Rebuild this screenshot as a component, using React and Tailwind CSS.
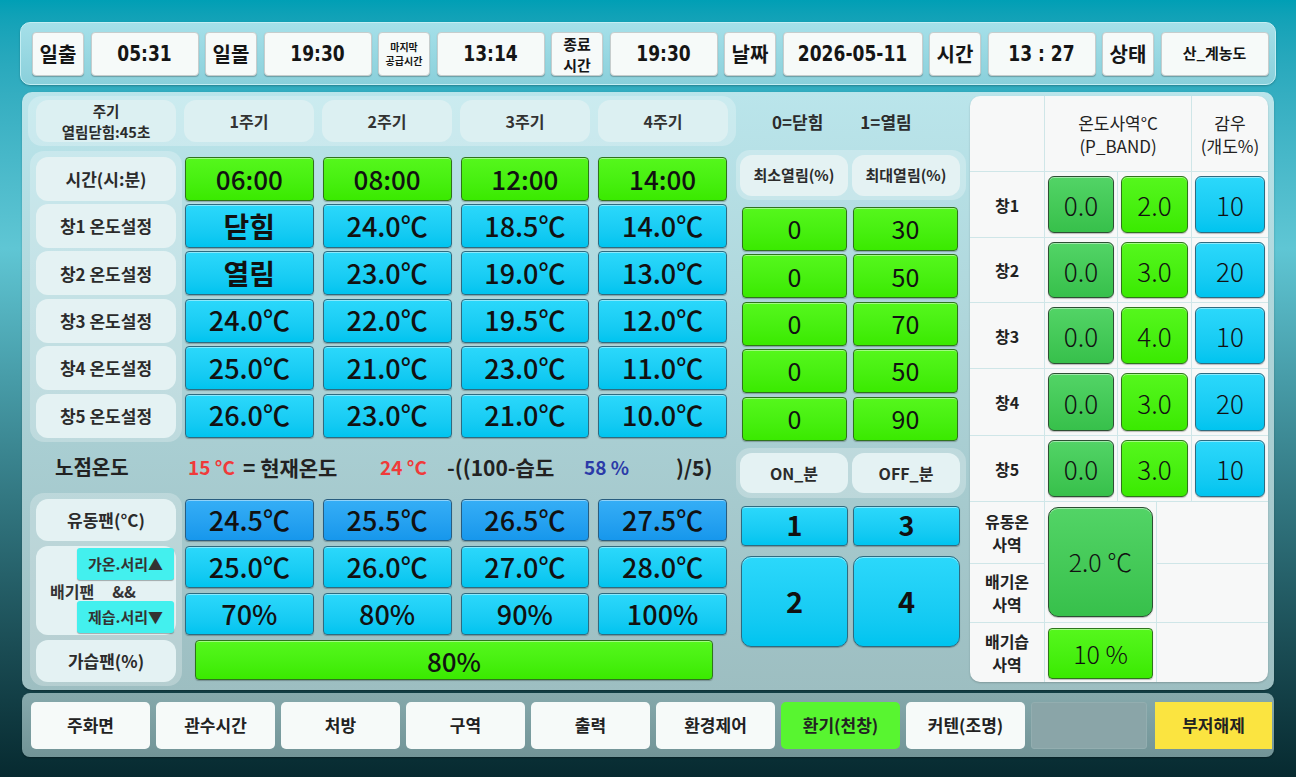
const topItems = [
  { label: "일출", value: "05:31" },
  { label: "일몰", value: "19:30" },
  { label: "마지막\n공급시간", value: "13:14", small: true },
  { label: "종료\n시간", value: "19:30", twoLine: true },
  { label: "날짜", value: "2026-05-11", wide: true },
  { label: "시간", value: "13 : 27" },
  { label: "상태", value: "산_계농도", text: true },
];

const timeRow = ["06:00", "08:00", "12:00", "14:00"];

const windowRows = [
  { label: "창1 온도설정", values: ["닫힘", "24.0℃", "18.5℃", "14.0℃"], min: "0", max: "30" },
  { label: "창2 온도설정", values: ["열림", "23.0℃", "19.0℃", "13.0℃"], min: "0", max: "50" },
  { label: "창3 온도설정", values: ["24.0℃", "22.0℃", "19.5℃", "12.0℃"], min: "0", max: "70" },
  { label: "창4 온도설정", values: ["25.0℃", "21.0℃", "23.0℃", "11.0℃"], min: "0", max: "50" },
  { label: "창5 온도설정", values: ["26.0℃", "23.0℃", "21.0℃", "10.0℃"], min: "0", max: "90" },
];

const bandRows = [
  { name: "창1", low: "0.0", high: "2.0", rain: "10" },
  { name: "창2", low: "0.0", high: "3.0", rain: "20" },
  { name: "창3", low: "0.0", high: "4.0", rain: "10" },
  { name: "창4", low: "0.0", high: "3.0", rain: "20" },
  { name: "창5", low: "0.0", high: "3.0", rain: "10" },
];

const navButtons = ["주화면", "관수시간", "처방", "구역", "출력", "환경제어", "환기(천창)", "커텐(조명)"];

const tones = {
  blue: "bg-linear-to-b from-[#2bd8fb] to-[#00c4ef] border-[#2e6b80]",
  deep: "bg-linear-to-b from-[#35aef6] to-[#1697ec] border-[#285d80]",
  lime: "bg-linear-to-b from-[#55f71c] to-[#3aea00] border-[#2f741c]",
  green: "bg-linear-to-b from-[#52d466] to-[#37c04b] border-[#2d4f33]",
};

function Cell({ tone = "blue", className = "", children }) {
  return (
    <div
      className={`flex items-center justify-center rounded-[4px] border shadow-[inset_0_1px_0_rgba(255,255,255,0.45),0_1px_1px_rgba(0,0,0,0.25)] text-[#111] ${tones[tone]} ${className}`}
    >
      {children}
    </div>
  );
}

function Label({ className = "", children }) {
  return (
    <div
      className={`flex items-center justify-center rounded-[12px] bg-[#e4f2f3] text-[17px] font-bold text-[#2b2b2b] ${className}`}
    >
      {children}
    </div>
  );
}

function TopCell({ className = "", children }) {
  return (
    <div
      className={`flex h-[44px] items-center justify-center rounded-[4px] border border-[#c6cdcd] bg-[#f6faf9] text-center font-bold text-[#151515] shadow-[0_1px_1px_rgba(0,0,0,0.25)] ${className}`}
    >
      {children}
    </div>
  );
}

function TopBar() {
  return (
    <div className="flex h-[63px] items-center gap-[6.5px] rounded-[10px] border border-[#c4eef3] bg-linear-to-b from-[#a6e0e9] to-[#8ad0db] pl-[11px] shadow-[0_1px_2px_rgba(0,0,0,0.25)]">
      {topItems.map((item) => (
        <div key={item.label} className="contents">
          <TopCell className="w-[52px]">
            {item.small ? (
              <span className="whitespace-pre text-[10px] leading-[14px]">{item.label}</span>
            ) : item.twoLine ? (
              <span className="whitespace-pre text-[15px] leading-[21px]">{item.label}</span>
            ) : (
              <span className="text-[20px]">{item.label}</span>
            )}
          </TopCell>
          <TopCell className={item.wide ? "w-[140px]" : "w-[108px]"}>
            {item.text ? (
              <span className="text-[15px]">{item.value}</span>
            ) : (
              <span className="inline-block scale-y-[1.12] font-['DejaVu_Sans_Condensed','Noto_Sans_CJK_KR',sans-serif] text-[19px]">
                {item.value}
              </span>
            )}
          </TopCell>
        </div>
      ))}
    </div>
  );
}

function ScheduleBlock() {
  return (
    <div className="flex w-[710px] flex-col">
      {/* 주기 header */}
      <div className="ml-[2px] flex h-[52px] items-center gap-[8px] rounded-[14px] bg-white/25 pl-[8px]">
        <div className="flex h-[42px] w-[140px] flex-col items-center justify-center rounded-[12px] bg-[#dcf0f2] text-[14.5px] font-bold leading-[21px] text-[#2b2b2b]">
          <span>주기</span>
          <span>열림닫힘:45초</span>
        </div>
        <div className="grid w-[544px] grid-cols-4 gap-x-[8px]">
          {["1주기", "2주기", "3주기", "4주기"].map((p) => (
            <div
              key={p}
              className="flex h-[42px] items-center justify-center rounded-[12px] bg-[#dcf0f2] text-[16px] font-bold text-[#333]"
            >
              {p}
            </div>
          ))}
        </div>
      </div>

      {/* time + window rows */}
      <div className="mt-[5px] flex">
        <div className="ml-[4px] flex w-[152px] flex-col gap-[3.4px] rounded-[14px] bg-white/25 px-[6px] pb-[4px] pt-[6px]">
          <Label className="h-[44px]">시간(시:분)</Label>
          {windowRows.map((r) => (
            <Label key={r.label} className="h-[44px]">
              {r.label}
            </Label>
          ))}
        </div>
        <div className="ml-[3px] grid w-[542px] grid-cols-4 gap-x-[9px] gap-y-[3.4px] self-start pt-[6px]">
          {timeRow.map((t) => (
            <Cell key={t} tone="lime" className="h-[44px] text-[26px] font-medium">
              {t}
            </Cell>
          ))}
          {windowRows.map((r) =>
            r.values.map((v, i) => (
              <Cell
                key={r.label + i}
                className={`h-[44px] ${v.length <= 2 ? "text-[28px] font-bold" : "text-[27px] font-medium"}`}
              >
                {v}
              </Cell>
            ))
          )}
        </div>
      </div>

      {/* 노점온도 formula */}
      <div className="flex h-[54px] items-center whitespace-nowrap text-[21px] font-bold text-[#222]">
        <span className="ml-[29px] w-[133px] text-[20px]">노점온도</span>
        <span className="w-[55px] text-[19px] text-[#f03a3a]">15 °C</span>
        <span className="w-[137px]">= 현재온도</span>
        <span className="w-[67px] text-[19px] text-[#f03a3a]">24 °C</span>
        <span className="w-[137px]">-((100-습도</span>
        <span className="w-[92px] text-[19px] text-[#2b3aa8]">58 %</span>
        <span>)/5)</span>
      </div>

      {/* fans */}
      <div className="flex">
        <div className="ml-[4px] flex w-[152px] flex-col gap-[5px] rounded-[14px] bg-white/25 px-[6px] pb-[4px] pt-[6px]">
          <Label className="h-[42px]">유동팬(°C)</Label>
          <div className="flex h-[89px] flex-col rounded-[12px] bg-[#e4f2f3] p-[2px]">
            <div className="ml-auto flex h-[32px] w-[97px] items-center justify-center rounded-[3px] bg-[#43f0ee] text-[15px] font-bold text-[#333] shadow-[0_1px_1px_rgba(0,0,0,0.3)]">
              가온.서리▲
            </div>
            <div className="flex h-[21px] items-center pl-[12px] text-[16px] font-bold text-[#333]">
              <span>배기팬</span>
              <span className="ml-[18px]">&amp;&amp;</span>
            </div>
            <div className="ml-auto flex h-[32px] w-[97px] items-center justify-center rounded-[3px] bg-[#43f0ee] text-[15px] font-bold text-[#333] shadow-[0_1px_1px_rgba(0,0,0,0.3)]">
              제습.서리▼
            </div>
          </div>
          <Label className="h-[42px]">가습팬(%)</Label>
        </div>
        <div className="ml-[3px] flex w-[542px] flex-col gap-[5px] pt-[6px]">
          <div className="grid grid-cols-4 gap-x-[9px] gap-y-[5px]">
            {["24.5℃", "25.5℃", "26.5℃", "27.5℃"].map((v) => (
              <Cell key={v} tone="deep" className="h-[42px] text-[27px] font-medium">
                {v}
              </Cell>
            ))}
            {["25.0℃", "26.0℃", "27.0℃", "28.0℃"].map((v) => (
              <Cell key={v} className="h-[42px] text-[27px] font-medium">
                {v}
              </Cell>
            ))}
            {["70%", "80%", "90%", "100%"].map((v) => (
              <Cell key={v} className="h-[42px] text-[27px] font-medium">
                {v}
              </Cell>
            ))}
          </div>
          <Cell tone="lime" className="ml-[10px] h-[40px] w-[518px] text-[26px] font-medium">
            80%
          </Cell>
        </div>
      </div>
    </div>
  );
}

function OpeningBlock() {
  return (
    <div className="flex w-[230px] flex-col">
      <div className="flex h-[52px] items-center text-[17px] font-bold text-[#2b2b2b]">
        <span className="ml-[36px]">0=닫힘</span>
        <span className="ml-[37px]">1=열림</span>
      </div>

      <div className="mt-[2px] flex h-[50px] items-center gap-[4px] rounded-[14px] bg-white/25 px-[4px]">
        <Label className="h-[41px] w-[108px] !text-[15px]">최소열림(%)</Label>
        <Label className="h-[41px] w-[108px] !text-[15px]">최대열림(%)</Label>
      </div>

      <div className="mt-[7px] grid grid-cols-[105px_105px] gap-x-[6px] gap-y-[3.4px] pl-[6px]">
        {windowRows.map((r) => (
          <div key={r.label} className="contents">
            <Cell tone="lime" className="h-[44px] text-[25px] font-normal">
              {r.min}
            </Cell>
            <Cell tone="lime" className="h-[44px] text-[25px] font-normal">
              {r.max}
            </Cell>
          </div>
        ))}
      </div>

      <div className="mt-[7px] flex h-[50px] items-center gap-[4px] rounded-[14px] bg-white/25 px-[4px]">
        <Label className="h-[40px] w-[108px] !text-[16px]">ON_분</Label>
        <Label className="h-[40px] w-[108px] !text-[16px]">OFF_분</Label>
      </div>

      <div className="mt-[8px] grid grid-cols-[107px_107px] gap-[5px] pl-[5px]">
        <Cell className="h-[40px] text-[27px] font-bold">1</Cell>
        <Cell className="h-[40px] text-[27px] font-bold">3</Cell>
        <Cell className="mt-[5px] h-[91px] rounded-[10px] text-[29px] font-bold">2</Cell>
        <Cell className="mt-[5px] h-[91px] rounded-[10px] text-[29px] font-bold">4</Cell>
      </div>
    </div>
  );
}

function BandTable() {
  const line = "border-r border-b border-[#cfe6e8]";
  return (
    <div className="ml-[4px] h-[586px] w-[298px] overflow-hidden rounded-[10px] bg-[#f7f8f8] shadow-[0_1px_2px_rgba(0,0,0,0.2)]">
      <div className="grid grid-cols-[75px_73px_74px_76px] grid-rows-[76px_66px_65px_66px_67px_66px]">
        <div className={line} />
        <div className={`col-span-2 flex flex-col items-center justify-center text-[17px] leading-[23px] text-[#222] ${line}`}>
          <span>온도사역°C</span>
          <span>(P_BAND)</span>
        </div>
        <div className="flex flex-col items-center justify-center border-b border-[#cfe6e8] text-[17px] leading-[23px] text-[#222]">
          <span>감우</span>
          <span>(개도%)</span>
        </div>
        {bandRows.map((r) => (
          <div key={r.name} className="contents">
            <div className={`flex items-center justify-center text-[16px] font-bold text-[#222] ${line}`}>
              {r.name}
            </div>
            <div className={`flex px-[3px] py-[4px] ${line}`}>
              <Cell tone="green" className="flex-1 rounded-[6px] text-[26px] font-light">
                {r.low}
              </Cell>
            </div>
            <div className={`flex px-[3px] py-[4px] ${line}`}>
              <Cell tone="lime" className="flex-1 rounded-[6px] text-[26px] font-light">
                {r.high}
              </Cell>
            </div>
            <div className="flex border-b border-[#cfe6e8] px-[3px] py-[4px]">
              <Cell className="flex-1 rounded-[6px] text-[26px] font-light">{r.rain}</Cell>
            </div>
          </div>
        ))}
      </div>

      <div className="grid grid-cols-[75px_112px_111px] grid-rows-[62px_59px_59px]">
        <div className={`flex flex-col items-center justify-center text-[16px] font-bold leading-[23px] text-[#222] ${line}`}>
          <span>유동온</span>
          <span>사역</span>
        </div>
        <div className={`row-span-2 flex px-[3px] py-[5px] ${line}`}>
          <Cell tone="green" className="flex-1 rounded-[10px] text-[25px] font-light">
            2.0 ℃
          </Cell>
        </div>
        <div className="border-b border-[#cfe6e8]" />
        <div className={`flex flex-col items-center justify-center text-[16px] font-bold leading-[23px] text-[#222] ${line}`}>
          <span>배기온</span>
          <span>사역</span>
        </div>
        <div className="border-b border-[#cfe6e8]" />
        <div className="flex flex-col items-center justify-center border-r border-[#cfe6e8] text-[16px] font-bold leading-[23px] text-[#222]">
          <span>배기습</span>
          <span>사역</span>
        </div>
        <div className="flex border-r border-[#cfe6e8] px-[3px] pb-[3px] pt-[5px]">
          <Cell tone="lime" className="flex-1 rounded-[4px] text-[25px] font-light">
            10 %
          </Cell>
        </div>
        <div />
      </div>
    </div>
  );
}

function BottomBar() {
  return (
    <div className="mx-[2px] mt-[3px] flex h-[64px] items-center gap-[6px] rounded-[8px] bg-linear-to-b from-[#86a9ac] to-[#729497] pl-[9px] shadow-[0_1px_2px_rgba(0,0,0,0.3)]">
      {navButtons.map((b) => (
        <div
          key={b}
          className={`flex h-[47px] w-[119px] items-center justify-center rounded-[5px] text-[17px] font-bold text-[#222] ${
            b === "환기(천창)" ? "bg-[#58f530]" : "bg-[#f6faf9]"
          }`}
        >
          {b}
        </div>
      ))}
      <div className="h-[47px] w-[116px] rounded-[3px] border border-[#93aeb0] bg-[#8aa5a8]" />
      <div className="ml-[2px] flex h-[47px] w-[117px] items-center justify-center bg-[#fbe440] text-[17px] font-bold text-[#222]">
        부저해제
      </div>
    </div>
  );
}

export default function App() {
  return (
    <div className="h-[777px] w-[1296px] overflow-hidden bg-linear-to-b from-[#009fb5] via-[#5fc6d4] via-32% to-[#072a30] px-[20px] pt-[22px] font-['Noto_Sans_CJK_KR','Noto_Sans',sans-serif] text-[#1a1a1a]">
      <TopBar />
      <div className="mx-[2px] mt-[7px] flex h-[598px] rounded-[10px] bg-linear-to-b from-[#bae5eb] to-[#9dbec1] p-[4px] shadow-[0_1px_2px_rgba(0,0,0,0.25)]">
        <ScheduleBlock />
        <OpeningBlock />
        <BandTable />
      </div>
      <BottomBar />
    </div>
  );
}
